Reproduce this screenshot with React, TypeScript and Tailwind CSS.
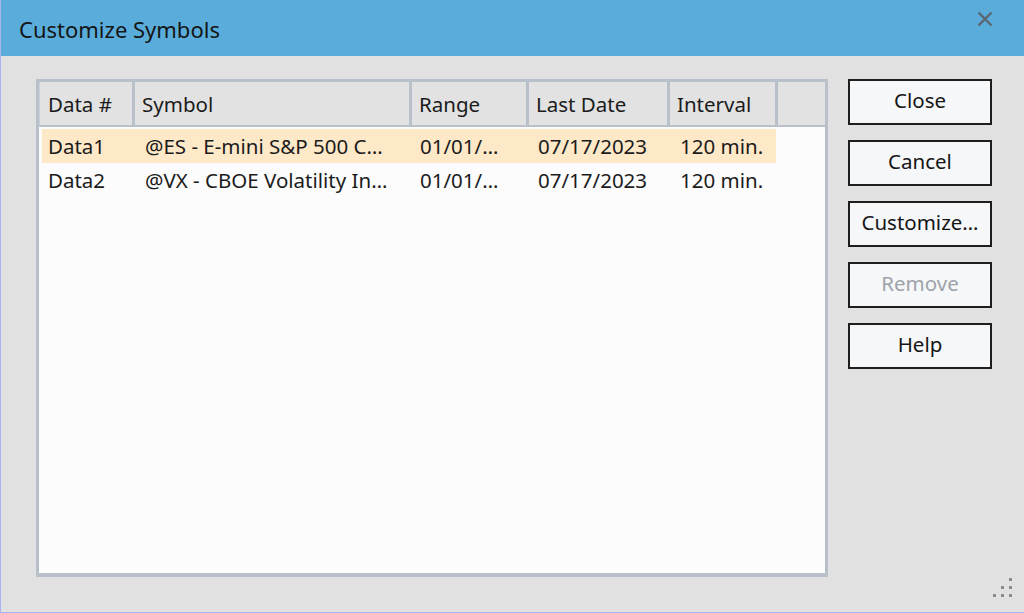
import React from "react"

const font = { fontFamily: '"Noto Sans", "Open Sans", sans-serif' }

const columns = [
  { label: "Data #", w: "w-[95px]", pl: "pl-[8px]" },
  { label: "Symbol", w: "w-[277px]", pl: "pl-[7px]" },
  { label: "Range", w: "w-[117px]", pl: "pl-[7px]" },
  { label: "Last Date", w: "w-[141px]", pl: "pl-[7px]" },
  { label: "Interval", w: "w-[108px]", pl: "pl-[7px]" },
]

const rows = [
  { data: "Data1", symbol: "@ES - E-mini S&P 500 C…", range: "01/01/…", last: "07/17/2023", interval: "120 min.", selected: true },
  { data: "Data2", symbol: "@VX - CBOE Volatility In…", range: "01/01/…", last: "07/17/2023", interval: "120 min.", selected: false },
]

function DialogButton({ label, disabled }: { label: string; disabled?: boolean }) {
  return (
    <button
      className={`w-[144px] h-[46px] pb-[3px] border-2 border-[#1e1e1e] bg-[#f5f7f9] text-[20.5px] leading-none ${
        disabled ? "text-[#9ea3a9]" : "text-[#151515]"
      }`}
    >
      {label}
    </button>
  )
}

export default function App() {
  return (
    <div
      className="relative w-[1024px] h-[613px] flex flex-col bg-[#e1e1e1] border-l border-b border-[#aab3ee] overflow-hidden"
      style={font}
    >
      {/* Title bar */}
      <div className="h-[56px] shrink-0 bg-[#5aaddb] flex items-center justify-between pl-[18px] pr-[31px]">
        <span className="text-[22px] leading-none text-[#151515] pt-[2px]">Customize Symbols</span>
        <svg width="16" height="16" viewBox="0 0 16 16" className="mb-[18px]">
          <path d="M1.5 1.5 L14.5 14.5 M14.5 1.5 L1.5 14.5" stroke="#5b6670" strokeWidth="2.4" />
        </svg>
      </div>

      {/* Body */}
      <div className="flex pl-[35px] pt-[23px]">
        {/* List */}
        <div className="w-[792px] h-[498px] border-[3px] border-b-4 border-[#b8c0c9] bg-[#fcfcfc] flex flex-col">
          <div className="flex h-[45px] shrink-0 bg-[#e2e2e2] border-b-2 border-[#b8c0c9] border-l border-l-[#c9d0d6]">
            {columns.map((c) => (
              <div
                key={c.label}
                className={`${c.w} ${c.pl} h-full flex items-center pt-[2px] border-r-[3px] border-[#b8c0c9] text-[20.5px] text-[#1b1b1b] whitespace-nowrap`}
              >
                {c.label}
              </div>
            ))}
            <div className="flex-1" />
          </div>
          <div className="pt-[2px] pl-[3px]">
            {rows.map((r) => (
              <div
                key={r.data}
                className={`flex w-[734px] h-[34px] items-center text-[20.5px] text-[#1b1b1b] whitespace-nowrap ${
                  r.selected ? "bg-[#fde8c8]" : ""
                }`}
              >
                <div className="w-[92px] pl-[6px]">{r.data}</div>
                <div className="w-[277px] pl-[11px]">{r.symbol}</div>
                <div className="w-[117px] pl-[9px]">{r.range}</div>
                <div className="w-[141px] pl-[10px]">{r.last}</div>
                <div className="w-[107px] pl-[11px]">{r.interval}</div>
              </div>
            ))}
          </div>
        </div>

        {/* Buttons */}
        <div className="flex flex-col gap-[15px] ml-[20px]">
          <DialogButton label="Close" />
          <DialogButton label="Cancel" />
          <DialogButton label="Customize…" />
          <DialogButton label="Remove" disabled />
          <DialogButton label="Help" />
        </div>
      </div>

      {/* Resize grip */}
      <svg width="20" height="20" viewBox="0 0 20 20" className="absolute right-[11px] bottom-[15px]">
        <g fill="#8a8a8a">
          <rect x="16" y="1" width="3" height="3" />
          <rect x="8" y="9" width="3" height="3" />
          <rect x="16" y="9" width="3" height="3" />
          <rect x="0" y="17" width="3" height="3" />
          <rect x="8" y="17" width="3" height="3" />
          <rect x="16" y="17" width="3" height="3" />
        </g>
      </svg>
    </div>
  )
}
